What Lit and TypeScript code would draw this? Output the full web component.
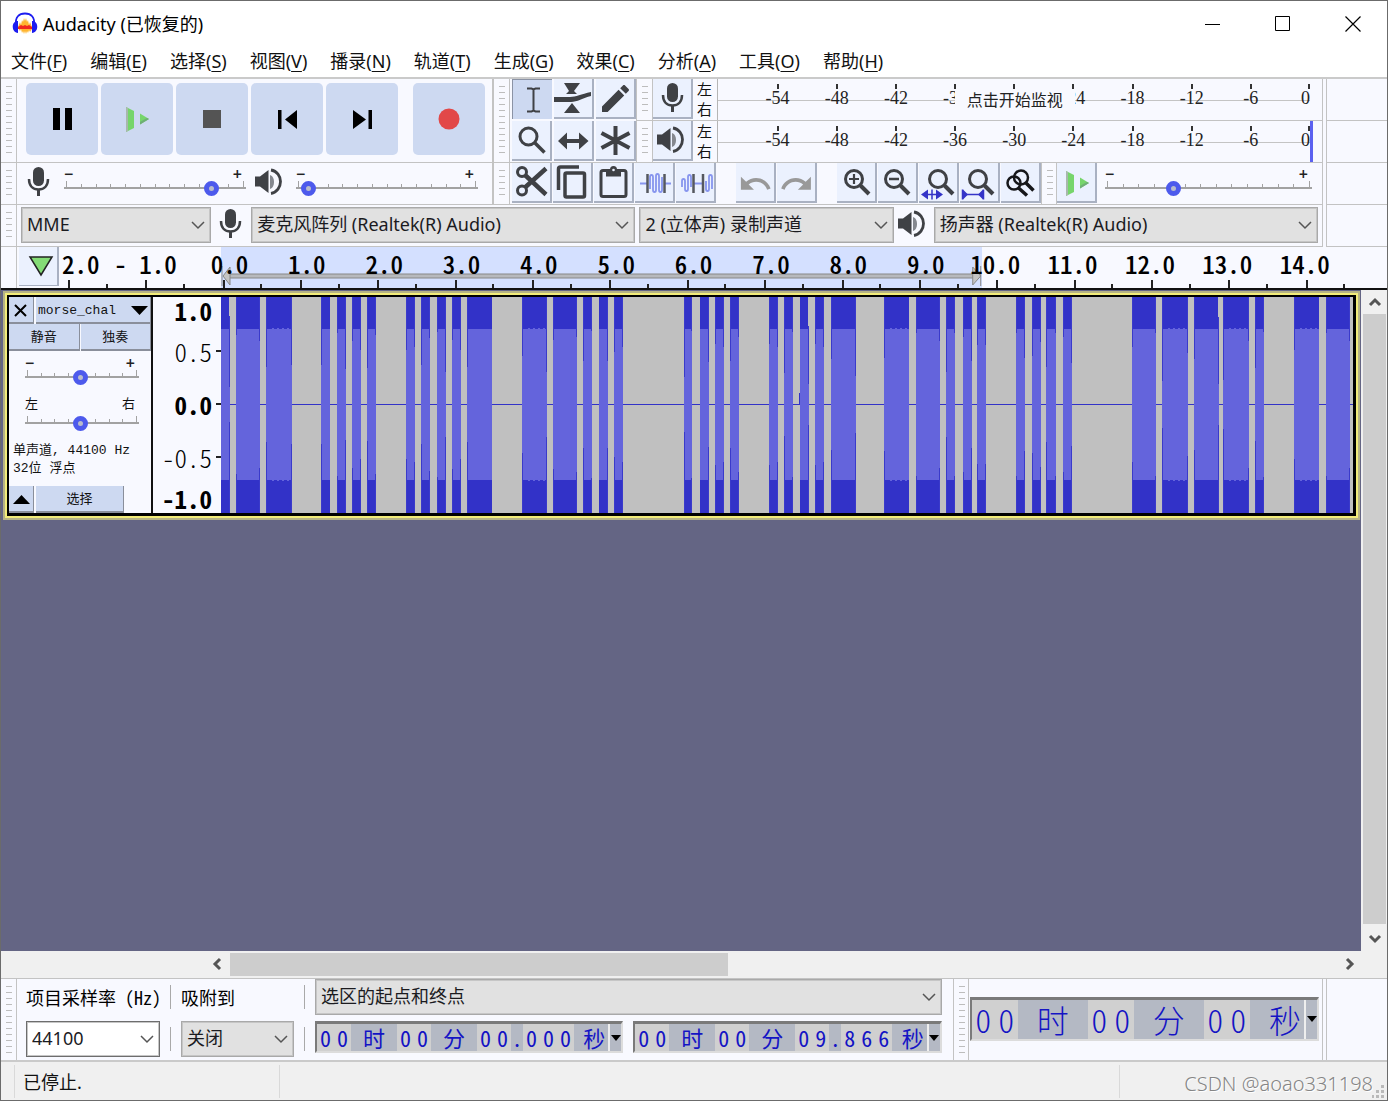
import { LitElement, html, css, svg, nothing } from "lit";
import { customElement, property } from "lit/decorators.js";
import { classMap } from "lit/directives/class-map.js";

const shared = css`
  :host {
    --face: #f8f9ff;
    --button: #cdd9f1;
    --tool: #ebf1fe;
    --line: #c3c3c3;
    --ink: #3f4145;
    --ui: "Noto Sans", "Noto Sans CJK SC", sans-serif;
    --half: "Noto Sans CJK SC", sans-serif;
  }
  * {
    box-sizing: border-box;
  }
  button {
    margin: 0;
    padding: 0;
    border: 0;
    background: none;
    font: inherit;
    color: inherit;
  }
  svg {
    display: block;
  }
`;

/* ---------- icons, all drawn on a 40 x 40 field ---------- */

const greenPlay = svg`
  <path d="M9 8l8 4v17l-8 4z" fill="#76d56b"/>
  <path d="M9 8l2 1v23l-2 1z" fill="#a8b8ac"/>
  <path d="M23 14.500l9 5.500-9 5.500z" fill="#76d56b"/>
  <path d="M23 25.500l9-5.500-2-1-7 4z" fill="#6fae76"/>`;

const lens = (cx: number, cy: number) => svg`
  <circle cx=${cx} cy=${cy} r="8.500" fill="none" stroke="currentColor" stroke-width="3"/>
  <path d="M${cx + 6.5} ${cy + 6.5}L${cx + 15} ${cy + 15}" stroke="currentColor" stroke-width="4"/>`;

const micShape = svg`
  <rect x="14" y="4" width="11" height="19" rx="5.500" fill="currentColor"/>
  <path d="M10 16c0 7 4 10.500 9.500 10.500S29 23 29 16" fill="none" stroke="currentColor" stroke-width="2.500"/>
  <path d="M19.500 26v7" stroke="currentColor" stroke-width="3"/>`;

const speakerShape = svg`
  <path d="M4 13.500h5l8.500-6.500v23L9 23.500H4z" fill="currentColor"/>
  <path d="M19 12v14c3-1 4-4 4-7s-1-6-4-7z" fill="#85888f"/>
  <path d="M20 7c6 1 9.500 6 9.500 11.500S26 29.500 20 30.500" fill="none" stroke="currentColor" stroke-width="2.800"/>`;

const icons: Record<string, unknown> = {
  ibeam: svg`<path d="M14 8.500h4.500l2 1 2-1H27M20.500 9v22M14 31.500h4.500l2-1 2 1H27" fill="none" stroke="currentColor" stroke-width="2"/>`,
  envelope: svg`<path d="M10 4h16l-6 8 3 3H12l3-3zM10 34h16l-8-10z" fill="currentColor"/>
    <path d="M0 18h16c6 0 11-3 21-5v4c-8 2-14 6-20 6H0z" fill="currentColor"/>`,
  pencil: svg`<g transform="translate(1.500 1.500) scale(1.500)"><path d="M3 17.250V21h3.750L17.810 9.940l-3.750-3.750L3 17.250zM20.710 7.040c.39-.39.39-1.020 0-1.410l-2.340-2.340c-.39-.39-1.020-.39-1.410 0l-1.830 1.830 3.750 3.750 1.830-1.830z" fill="currentColor"/></g>`,
  zoom: svg`<circle cx="16.500" cy="15.500" r="8.500" fill="none" stroke="currentColor" stroke-width="3"/><path d="M22.500 21.500l10 10" stroke="currentColor" stroke-width="3.500"/>`,
  shift: svg`<path d="M4 20l9-8.500v6.500h12v-6.500l9.500 8.500-9.500 8.500V22H13v6.500z" fill="currentColor"/>`,
  multi: svg`<path d="M19.500 5v29M5.500 12l28 15M33.500 12l-28 15" stroke="currentColor" stroke-width="4"/>`,
  mic: micShape,
  speaker: speakerShape,
  cut: svg`<g fill="none" stroke="currentColor"><circle cx="10" cy="9" r="4.500" stroke-width="3"/><circle cx="10" cy="27.500" r="4.500" stroke-width="3"/>
    <path d="M13 12L34 31.500M13 24.500L34 5.500" stroke-width="4.500"/></g>`,
  copy: svg`<g fill="none" stroke="currentColor" stroke-width="3.500"><path d="M5.500 27V6a2 2 0 0 1 2-2H26"/><rect x="12" y="10" width="19.500" height="24" rx="1.500"/></g>`,
  paste: svg`<rect x="7" y="7.500" width="25" height="26" rx="2" fill="none" stroke="currentColor" stroke-width="3"/>
    <path d="M12 6.500h4a3.500 3.500 0 0 1 7 0h4v7H12z" fill="currentColor"/><circle cx="19.500" cy="7" r="1.300" fill="#ebf1fe"/>`,
  trim: svg`<path d="M5 20.500h7M29 20.500h7M15 26V14q0-2 1.500-2t1.500 2v13q0 2 1.500 2t1.500-2V13q0-2 1.500-2t1.500 2v14q0 2 1.500 2t1.500-2V14" fill="none" stroke="#8795ee" stroke-width="1.800"/>
    <path d="M12.500 11v19M29.500 11v19" stroke="#55585f" stroke-width="2.500"/>`,
  silence: svg`<path d="M6 24v-6q0-2 1.500-2t1.500 2v8q0 2 1.500 2t1.500-2V14q0-2 1.500-2t1.500 2v10M18 20.500h9M30 18v8q0 2 1.500 2t1.500-2V14q0-2 1.500-2t1.500 2v12" fill="none" stroke="#8795ee" stroke-width="1.800"/>
    <path d="M17.500 11v19M27 11v19" stroke="#55585f" stroke-width="2.500"/>`,
  undo: svg`<g transform="translate(2 3.500) scale(1.450)"><path d="M12.500 8c-2.650 0-5.050.99-6.900 2.600L2 7v9h9l-3.620-3.620c1.390-1.160 3.160-1.880 5.120-1.880 3.540 0 6.550 2.310 7.600 5.500l2.370-.78C21.080 11.030 17.150 8 12.500 8z" fill="#999"/></g>`,
  redo: svg`<g transform="translate(2 3.500) scale(1.450)"><path d="M18.400 10.600C16.550 8.990 14.150 8 11.500 8c-4.650 0-8.580 3.030-9.960 7.220L3.900 16c1.050-3.190 4.050-5.500 7.600-5.500 1.950 0 3.730.72 5.120 1.880L13 16h9V7l-3.600 3.600z" fill="#999"/></g>`,
  zoomIn: svg`${lens(17, 16)}<path d="M12 16h10M17 11v10" stroke="currentColor" stroke-width="2.200"/>`,
  zoomOut: svg`${lens(16, 16)}<path d="M11 16h10" stroke="currentColor" stroke-width="2.500"/>`,
  fitSelection: svg`${lens(19, 16)}<path d="M2 31.500l7-5v10zM24 31.500l-7-5v10z" fill="#3434c8"/><path d="M8 31.500h10M13 26.500v10" stroke="#3434c8" stroke-width="1.500"/>`,
  fitProject: svg`${lens(18, 16)}<path d="M8 31.500l-5-5v10zM18 31.500l5-5v10z" fill="#3434c8"/><path d="M3 31.500h20M2.500 26.500v10M23.500 26.500v10" stroke="#3434c8" stroke-width="1.500"/>`,
  zoomToggle: svg`<g fill="none" stroke="#16171a"><circle cx="13" cy="20" r="6.500" stroke-width="2.500"/><circle cx="20" cy="14.500" r="7" stroke-width="2.500"/>
    <path d="M17 24.500l9 8M25 20l7.500 7.500" stroke-width="3.500"/></g>`,
  play: greenPlay,
  pause: svg`<path d="M11 9h7v22h-7zM23 9h7v22h-7z" fill="#000"/>`,
  stop: svg`<path d="M11 11h18v18H11z" fill="#545454"/>`,
  start: svg`<path d="M11 11h3.500v19H11zM30 11v19l-12-9.500z" fill="#000"/>`,
  end: svg`<path d="M26.500 11H30v19h-3.500zM11 11v19l13-9.500z" fill="#000"/>`,
  record: svg`<circle cx="20" cy="20" r="10.500" fill="#e24848"/>`,
};

const icon = (name: string) =>
  html`<svg width="40" height="40" viewBox="0 0 40 40" aria-hidden="true">${icons[name]}</svg>`;

/* ---------- slider with tick marks ---------- */

@customElement("tick-slider")
export class TickSlider extends LitElement {
  @property() low = "−";
  @property() high = "+";
  @property() name = "";
  @property({ type: Number }) value = 50;
  @property({ type: Number }) ticks = 13;

  static styles = [
    shared,
    css`
      :host {
        display: block;
      }
      .ends {
        display: flex;
        justify-content: space-between;
        padding-right: 4px;
        height: 13px;
        font: 600 16px/14px var(--ui);
        color: #222;
      }
      .body {
        position: relative;
        height: 16px;
      }
      .marks {
        display: flex;
        justify-content: space-between;
        align-items: flex-end;
        height: 9px;
        padding: 0 2px;
        border-bottom: 2px solid #a2a2a2;
      }
      .marks i {
        width: 1px;
        height: 3px;
        background: #a2a2a2;
      }
      .marks i:first-child,
      .marks i:last-child {
        height: 6px;
      }
      input {
        position: absolute;
        inset: 0;
        width: 100%;
        height: 16px;
        margin: 0;
        background: none;
        appearance: none;
      }
      input::-webkit-slider-thumb {
        appearance: none;
        width: 15px;
        height: 15px;
        border: 5px solid #4d5aec;
        border-radius: 50%;
        background: #b9bccb;
      }
    `,
  ];

  render() {
    return html`
      ${this.low || this.high
        ? html`<div class="ends"><span>${this.low}</span><span>${this.high}</span></div>`
        : nothing}
      <div class="body">
        <div class="marks">${Array.from({ length: this.ticks }, () => html`<i></i>`)}</div>
        <input type="range" min="0" max="100" .value=${String(this.value)} aria-label=${this.name} />
      </div>
    `;
  }
}

/* ---------- drop-down box ---------- */

const dropStyles = css`
  .drop {
    display: grid;
    grid-template-columns: minmax(0, 1fr);
    min-width: 0;
    height: 36px;
  }
  .drop select,
  .drop svg {
    grid-area: 1 / 1;
  }
  .drop select {
    width: 100%;
    margin: 0;
    padding: 0 30px 2px 5px;
    border: 1px solid #a9a9a9;
    border-radius: 0;
    outline: 1px solid #c6c6c6;
    outline-offset: -2px;
    background: #e1e1e1;
    appearance: none;
    font: 18px/24px var(--ui);
    color: #1b1b1f;
  }
  .drop.editable select {
    border-color: #6d6d6d;
    background: #fff;
  }
  .drop svg {
    align-self: center;
    justify-self: end;
    margin-right: 6px;
    pointer-events: none;
  }
`;

const drop = (id: string, value: string, extra = "", name = "") => html`
  <div class="drop ${extra}">
    <select id=${id} aria-label=${name || nothing}><option>${value}</option></select>
    <svg width="14" height="10" viewBox="0 0 14 10"><path d="M1 2l6 6 6-6" fill="none" stroke="#555" stroke-width="1.500"/></svg>
  </div>
`;

/* ---------- level meter ---------- */

@customElement("level-meter")
export class LevelMeter extends LitElement {
  @property() kind = "mic";
  @property() hint = "";

  static styles = [
    shared,
    css`
      :host {
        display: flex;
        flex: 1;
        min-width: 0;
      }
      .source {
        width: 40px;
        height: 40px;
        overflow: hidden;
        border-right: 2px solid #a9b1c2;
        border-bottom: 2px solid #a9b1c2;
        background: var(--tool);
        color: var(--ink);
      }
      .sides {
        display: flex;
        flex-direction: column;
        width: 24px;
        padding-left: 4px;
        font: 15px/20px var(--half);
        color: #111;
      }
      .scale {
        position: relative;
        flex: 1;
        display: grid;
        grid-template-columns: repeat(9, 2fr) 1fr;
        padding-left: 30px;
        border-left: 1px solid #b5b5b5;
        background: linear-gradient(#c4c4c4, #c4c4c4) 0 21px / 100% 1px no-repeat;
      }
      .mark {
        display: flex;
        flex-direction: column;
        align-items: center;
        padding-top: 5px;
        font: 18px/18px "Liberation Serif", serif;
        color: #222;
      }
      .mark::before {
        content: "";
        width: 2px;
        height: 5px;
        background: #333;
      }
      .zero {
        align-items: flex-end;
      }
      .end {
        width: 12px;
        border-left: 3px solid transparent;
      }
      .peak {
        border-color: #5b61f0;
      }
      .hint {
        position: absolute;
        top: 10px;
        left: 40%;
        width: 120px;
        background: var(--face);
        font: 16px/20px var(--half);
        text-align: center;
        color: #222;
      }
    `,
  ];

  render() {
    const middle = this.hint ? "" : "-30";
    const marks = ["-54", "-48", "-42", "-36", middle, "-24", "-18", "-12", "-6", "0"];
    return html`
      <button class="source" aria-label=${this.kind}>${icon(this.kind)}</button>
      <div class="sides"><span>左</span><span>右</span></div>
      <div class="scale">
        ${marks.map((m) => html`<span class=${classMap({ mark: true, zero: m === "0" })}>${m}</span>`)}
        ${this.hint ? html`<span class="hint">${this.hint}</span>` : nothing}
      </div>
      <div class=${classMap({ end: true, peak: !this.hint })}></div>
    `;
  }
}

/* ---------- time read-out ---------- */

@customElement("time-field")
export class TimeField extends LitElement {
  @property({ type: Array }) parts: string[] = [];
  @property({ type: Boolean, reflect: true }) large = false;

  static styles = [
    shared,
    css`
      :host {
        display: flex;
        flex: 1;
        height: 32px;
        border: 2px solid #dcdcdc;
        border-top: 3px solid #7a7a7a;
        border-left-color: #7a7a7a;
        background: #b4b9c4;
        font: 22px/26px var(--half);
        color: #1414c4;
        --cell: 17px;
        --sep: 46px;
      }
      :host([large]) {
        height: 44px;
        font-size: 32px;
        font-weight: 300;
        line-height: 38px;
        --cell: 23px;
        --sep: 70px;
      }
      .box {
        display: flex;
        background: #d0d0d0;
      }
      .box span {
        width: var(--cell);
        text-align: center;
        font-feature-settings: "hwid";
      }
      .sep {
        width: var(--sep);
        text-align: center;
      }
      .point {
        width: 12px;
        text-align: center;
      }
      .last {
        flex: 1;
        text-align: right;
        padding-right: 3px;
      }
      .format {
        width: 13px;
        border-left: 2px solid #eee;
        display: grid;
        place-items: center;
      }
    `,
  ];

  render() {
    return html`
      ${this.parts.map((p, i) => {
        if (/^\d+$/.test(p)) return html`<span class="box">${[...p].map((d) => html`<span>${d}</span>`)}</span>`;
        const last = i === this.parts.length - 1;
        return html`<span class=${classMap({ sep: !last && p !== ".", point: p === ".", last })}>${p}</span>`;
      })}
      <button class="format" aria-label="format"><svg width="10" height="6" viewBox="0 0 10 6"><path d="M0 0h10L5 6z"/></svg></button>
    `;
  }
}

/* ---------- audio clip ---------- */

/* start, end, depth of the left edge, depth of the right edge */
const bursts: number[][] = [
  [221, 230, 328, 387], [236, 260, 335, 341], [266, 292, 367, 365],
  [321, 330, 365, 328], [337, 346, 333, 369], [352, 361, 341, 350], [367, 376, 368, 335],
  [406, 415, 350, 347], [421, 430, 365, 338], [437, 446, 332, 372], [452, 461, 340, 350], [467, 492, 367, 328],
  [522, 547, 356, 372], [553, 577, 340, 337], [583, 592, 361, 331], [599, 608, 328, 361], [614, 623, 352, 347],
  [684, 692, 377, 331], [700, 709, 328, 362], [715, 724, 344, 347], [730, 739, 361, 337],
  [769, 778, 344, 347], [784, 793, 373, 332], [800, 809, 328, 384], [815, 824, 344, 347], [831, 856, 359, 376],
  [884, 909, 358, 328], [916, 940, 333, 341], [946, 955, 372, 333], [963, 972, 337, 361], [977, 986, 345, 345],
  [1016, 1025, 333, 358], [1032, 1041, 356, 342], [1046, 1056, 367, 333], [1063, 1072, 337, 363],
  [1132, 1156, 347, 333], [1162, 1188, 381, 353], [1194, 1219, 359, 384], [1223, 1249, 380, 341], [1255, 1264, 368, 332],
  [1294, 1319, 350, 328], [1326, 1350, 333, 341],
];

@customElement("wave-clip")
export class WaveClip extends LitElement {
  static styles = [
    shared,
    css`
      :host {
        display: block;
        flex: 1;
        min-width: 0;
        background: #c0c0c0;
      }
      svg {
        width: 100%;
        height: 216px;
      }
    `,
  ];

  render() {
    const top = 297;
    return html`
      <svg viewBox="221 297 1132 216" preserveAspectRatio="none" shape-rendering="crispEdges">
        <path d="M221 404h1132v1H221z" fill="#3232c8" />
        <path d="M799 393h1v12h-1z" fill="#3232c8" />
        ${bursts.map(([a, b, l, r], i) => {
          const edge = (x: number, y: number) =>
            svg`<path d="M${x} ${top}h1V${y}h-1zM${x} ${809 - y}h1V513h-1z" fill="#3a3acb"/>`;
          const frill = b - a > 20 && i % 2 === 0;
          return svg`
            <path d="M${a} ${top}H${b}V513H${a}z" fill="#3232c8"/>
            <path d="M${a} 329H${b}V480H${a}z" fill="#6464dc"/>
            ${frill ? svg`<path d="M${a + 6} 328.500H${b - 1}M${a + 6} 480.500H${b - 1}" stroke="#6464dc" stroke-dasharray="2 3"/>` : nothing}
            ${l > 328 ? edge(a, l) : nothing}${r > 328 ? edge(b - 1, r) : nothing}`;
        })}
        <path d="M229 297h1v19h-1zM808 297h1v29h-1zM1218 297h1v20h-1z" fill="#c0c0c0" />
      </svg>
    `;
  }
}

/* ---------- window ---------- */

@customElement("app-root")
export class AppRoot extends LitElement {
  static styles = [
    shared,
    dropStyles,
    css`
      :host {
        display: flex;
        flex-direction: column;
        min-height: 100vh;
        border: 1px solid #6b6b6b;
        box-sizing: border-box;
        background: #fff;
        font: 18px/24px var(--ui);
        color: #111;
      }
      .title {
        display: flex;
        align-items: center;
        height: 45px;
        padding: 0 2px 0 11px;
        gap: 5px;
      }
      .title h1 {
        flex: 1;
        margin: 0;
        font: 18px/24px var(--ui);
        color: #000;
      }
      .win {
        display: grid;
        place-items: center;
        width: 65px;
        height: 44px;
      }
      .menu {
        display: flex;
        align-items: center;
        gap: 23px;
        height: 31px;
        padding: 0 0 2px 10px;
      }
      .menu u {
        text-underline-offset: 3px;
      }

      /* toolbars */
      .dock {
        display: flex;
        border-top: 2px solid #cacaca;
        background: var(--face);
      }
      .bars {
        flex: 1;
        min-width: 0;
        margin-right: 3px;
        border-right: 1px solid var(--line);
      }
      .rest {
        width: 61px;
        border-left: 1px solid var(--line);
      }
      .rest div {
        height: 42px;
        border-bottom: 1px solid var(--line);
      }
      .pair,
      .row {
        display: flex;
      }
      .left {
        width: 493px;
        border-right: 2px solid var(--line);
      }
      .right {
        flex: 1;
        min-width: 0;
      }
      .row {
        height: 42px;
        border-bottom: 1px solid var(--line);
      }
      .tall {
        height: 84px;
      }
      .grip {
        flex: none;
        width: 16px;
        border-right: 1px solid var(--line);
        background: repeating-linear-gradient(#bdbdbd 0 1px, transparent 1px 6px) 5px 7px / 6px calc(100% - 14px) no-repeat;
      }
      .plain {
        background: none;
      }
      .transport {
        display: flex;
        gap: 3px;
        padding: 4px 0 0 9px;
      }
      .big {
        display: grid;
        place-items: center;
        width: 72px;
        height: 72px;
        border-radius: 5px;
        background: var(--button);
      }
      .pic {
        display: grid;
        place-items: start center;
        flex: none;
        width: 40px;
        color: var(--ink);
      }
      .big:last-child {
        margin-left: 12px;
      }
      .tools {
        display: grid;
        grid-template-columns: repeat(3, 40px);
        grid-auto-rows: 40px;
        gap: 2px;
        padding-left: 2px;
      }
      .tool {
        flex: none;
        width: 40px;
        height: 40px;
        overflow: hidden;
        border-right: 2px solid #a9b1c2;
        border-bottom: 2px solid #a9b1c2;
        background: var(--tool);
        color: var(--ink);
      }
      .tool.on {
        border: 0;
        border-top: 1px solid #8b93a5;
        border-left: 1px solid #8b93a5;
        background: var(--button);
      }
      .meters {
        flex: 1;
        min-width: 0;
        border-left: 1px solid var(--line);
      }
      .mixer tick-slider {
        flex: 1;
        margin: 4px 3px 0;
      }
      .mixer .pic {
        width: 44px;
      }
      .mixer tick-slider:last-child {
        margin-right: 14px;
      }
      .edit {
        display: flex;
        gap: 1px;
        padding-left: 2px;
      }
      .group {
        margin-left: 19px;
      }
      .speed {
        flex: 1;
        margin: 4px 10px 0 8px;
      }
      .edge {
        border-left: 1px solid var(--line);
      }
      .devices {
        padding-right: 4px;
      }
      .devices .grip {
        margin-right: 4px;
      }
      .devices .drop {
        margin-top: 2px;
      }
      .host {
        flex: 190;
      }
      .input {
        flex: 384;
      }
      .devices .channels {
        flex: 254;
        margin-left: 4px;
      }

      /* timeline */
      .timeline {
        display: flex;
        height: 43px;
        border-bottom: 2px solid #111;
        background: var(--face);
      }
      .pin {
        display: grid;
        place-items: center;
        width: 40px;
        margin: 0 0 2px 2px;
        padding-left: 5px;
        border-right: 2px solid #a9b1c2;
        border-bottom: 1px solid #a9b1c2;
        background: var(--tool);
      }
      .ruler {
        flex: 1;
        overflow: hidden;
        padding: 0 4px 0 9px;
      }
      .seconds {
        position: relative;
        display: grid;
        grid-template-columns: repeat(17, minmax(0, 1fr));
        height: 41px;
      }
      .second {
        position: relative;
        display: flex;
        background:
          linear-gradient(#222, #222) 0 100% / 2px 8px no-repeat,
          linear-gradient(#222, #222) 50% 100% / 2px 4px no-repeat;
        white-space: nowrap;
      }
      .num {
        font: 500 25px/24px var(--half);
        font-feature-settings: "hwid";
        color: #000;
      }
      .second .num {
        margin: 4px 0 0 -12px;
      }
      .second .wide {
        margin-left: -26px;
      }
      .second .minus {
        margin-left: -31px;
      }
      .second .first {
        margin-left: -6px;
      }
      .selection {
        position: absolute;
        top: 0;
        bottom: 0;
        left: 11.65%;
        width: 57.85%;
        background: #d4e0ff;
      }
      .range {
        position: absolute;
        left: 0;
        bottom: 2px;
        width: 100%;
        overflow: visible;
      }

      /* tracks */
      .work {
        flex: 1;
        display: flex;
      }
      .canvas {
        flex: 1;
        min-width: 0;
        padding: 1px 1px 0 2px;
        background: #646584;
      }
      .track {
        border: 2px solid #b5b286;
      }
      .focus {
        border: 2px solid #f2ec7a;
      }
      .inner {
        display: flex;
        border: solid #000;
        border-width: 2px 3px 3px 2px;
        background: var(--face);
      }
      .panel {
        display: flex;
        flex-direction: column;
        width: 144px;
        border-right: 2px solid #111;
        font: 13px/18px "Liberation Mono", "Noto Sans CJK SC", monospace;
      }
      .strip {
        display: grid;
        height: 27px;
        gap: 2px;
      }
      .strip button {
        display: flex;
        align-items: center;
        justify-content: center;
        padding-top: 2px;
        border-right: 1px solid #8a8f9b;
        border-bottom: 2px solid #8a8f9b;
        background: var(--button);
      }
      .head {
        grid-template-columns: 25px 1fr;
      }
      .head .label {
        justify-content: space-between;
        padding: 2px 2px 0;
      }
      .half {
        grid-template-columns: 1fr 1fr;
        gap: 1px;
      }
      .foot {
        grid-template-columns: 25px 88px;
        margin-top: auto;
      }
      .panel tick-slider {
        margin: 5px 12px 0 16px;
      }
      .sides {
        display: flex;
        justify-content: space-between;
        margin: 11px 16px 0;
      }
      .panel .pan {
        margin-top: 1px;
      }
      .about {
        margin: 0;
        padding: 11px 0 0 4px;
        white-space: nowrap;
      }
      .levels {
        display: grid;
        grid-template-rows: 28px 1fr 1fr 1fr 28px;
        width: 68px;
      }
      .levels .num {
        display: flex;
        align-items: center;
        justify-content: flex-end;
        padding: 0 9px 2px 0;
      }
      .levels .num:nth-child(odd) {
        font-weight: 700;
      }
      .levels .num:nth-child(even) {
        font-weight: 300;
      }
      .levels .tick {
        padding-right: 0;
      }
      .levels .tick::after {
        content: "";
        width: 5px;
        height: 2px;
        margin-left: 4px;
        background: #222;
      }

      /* scroll bars */
      .vbar {
        display: flex;
        flex-direction: column;
        width: 26px;
        padding: 0 1px 0 2px;
        background: #f0f0f0;
      }
      .vbar button,
      .hbar button {
        display: grid;
        place-items: center;
        width: 24px;
        height: 26px;
      }
      .vbar button {
        height: 24px;
      }
      .vthumb {
        flex: 1;
        margin-bottom: 3px;
        background: #cdcdcd;
      }
      .hbar {
        display: flex;
        height: 27px;
        padding: 0 25px 0 204px;
        background: #f0f0f0;
      }
      .htrack {
        flex: 1;
        padding: 2px 1px;
      }
      .hthumb {
        width: 45%;
        height: 23px;
        background: #cdcdcd;
      }

      /* selection bar */
      .bottom {
        display: flex;
        height: 84px;
        border-top: 1px solid var(--line);
        border-bottom: 2px solid #cacaca;
        background: var(--face);
      }
      .choices {
        flex: 915;
        display: grid;
        grid-template-columns: 134px 1px 113px 1px 1fr;
        grid-template-rows: 36px 36px;
        gap: 6px 10px;
        padding: 0 11px 0 9px;
        min-width: 0;
      }
      .choices label {
        align-self: center;
        font: 18px/24px var(--half);
        font-feature-settings: "hwid";
        color: #000;
        white-space: nowrap;
      }
      .rule {
        align-self: center;
        height: 24px;
        background: #a9a9a9;
      }
      .fields {
        display: flex;
        gap: 10px;
        min-width: 0;
      }
      .clock {
        flex: 349;
        display: flex;
        align-items: center;
        padding: 0 3px 2px 1px;
        border-right: 1px solid var(--line);
      }
      .tail {
        width: 61px;
        margin-left: 3px;
        border-left: 1px solid var(--line);
      }

      /* status */
      .status {
        display: flex;
        position: relative;
        height: 38px;
        padding: 3px 0 2px 13px;
        background: #f0f0f0;
        line-height: 34px;
      }
      .status span {
        padding-left: 8px;
        border-left: 1px solid #d9d9d9;
      }
      .state {
        width: 265px;
      }
      .mid {
        flex: 1;
      }
      .status .sign {
        width: 268px;
        padding: 2px 14px 0 0;
        font: 300 20px/34px "Noto Sans", sans-serif;
        text-align: right;
        color: #858585;
        text-shadow: 1px 1px 0 #fff;
      }
      .corner {
        position: absolute;
        right: 2px;
        bottom: 2px;
      }
    `,
  ];

  private tool(name: string, extra: Record<string, boolean> = {}) {
    return html`<button class=${classMap({ tool: true, ...extra })} aria-label=${name}>${icon(name)}</button>`;
  }

  private chevron(d: string) {
    return html`<svg width="14" height="14" viewBox="0 0 14 14"><path d=${d} fill="none" stroke="#555" stroke-width="3"/></svg>`;
  }

  render() {
    const menus = [
      ["文件", "F"], ["编辑", "E"], ["选择", "S"], ["视图", "V"], ["播录", "N"], ["轨道", "T"],
      ["生成", "G"], ["效果", "C"], ["分析", "A"], ["工具", "O"], ["帮助", "H"],
    ];
    const seconds = ["2.0", "- 1.0", ...Array.from({ length: 15 }, (_, i) => `${i}.0`)];
    return html`
      <header class="title">
        <svg width="26" height="24" viewBox="0 0 26 24" aria-hidden="true">
          <path d="M4 13C3 5 7 1.500 13 1.500S23 5 22 13" fill="none" stroke="#1c1cf0" stroke-width="1.800"/>
          <path d="M6 15l2-5 1 3 1-5 1 2 1-4 1 3 1-3 1 4 1-2 1 5 1-3 2 5v2l-2 3-1-2-1 3-1-2-1 3-1-3-1 3-1-3-1 2-1-4-1 2-2-3z" fill="#ffb52e"/>
          <path d="M6 15l3-2 2 1 2-1 2 1 2-1 3 2v2H6z" fill="#f0281e"/>
          <path d="M6 9c-7 0-7 11 0 12zM20 9c7 0 7 11 0 12z" fill="#1c1cf0"/>
        </svg>
        <h1>Audacity (已恢复的)</h1>
        <button class="win" aria-label="minimize"><svg width="16" height="16"><path d="M0 8.500h15" stroke="#000"/></svg></button>
        <button class="win" aria-label="maximize"><svg width="16" height="16"><path d="M.5.500h14v14H.5z" fill="none" stroke="#000"/></svg></button>
        <button class="win" aria-label="close"><svg width="16" height="16"><path d="M.5.500l15 15M15.500.500l-15 15" stroke="#000" stroke-width="1.200"/></svg></button>
      </header>
      <nav class="menu">${menus.map(([t, k]) => html`<button>${t}(<u>${k}</u>)</button>`)}</nav>

      <section class="dock">
        <div class="bars">
          <div class="pair">
            <div class="left">
              <div class="row tall">
                <div class="grip"></div>
                <div class="transport">
                  ${["pause", "play", "stop", "start", "end", "record"].map(
                    (n) => html`<button class="big" aria-label=${n}>${icon(n)}</button>`
                  )}
                </div>
              </div>
              <div class="row mixer">
                <div class="grip"></div>
                <span class="pic">${icon("mic")}</span>
                <tick-slider name="recording volume" .value=${84}></tick-slider>
                <span class="pic">${icon("speaker")}</span>
                <tick-slider name="playback volume" .value=${3}></tick-slider>
              </div>
            </div>
            <div class="right">
              <div class="pair">
                <div class="row tall">
                  <div class="grip"></div>
                  <div class="tools">
                    ${this.tool("ibeam", { on: true })}
                    ${["envelope", "pencil", "zoom", "shift", "multi"].map((n) => this.tool(n))}
                  </div>
                </div>
                <div class="meters">
                  <div class="row"><div class="grip"></div><level-meter kind="mic" hint="点击开始监视"></level-meter></div>
                  <div class="row"><div class="grip"></div><level-meter kind="speaker"></level-meter></div>
                </div>
              </div>
              <div class="row">
                <div class="grip"></div>
                <div class="edit">
                  ${["cut", "copy", "paste", "trim", "silence"].map((n) => this.tool(n))}
                  ${this.tool("undo", { group: true })}${this.tool("redo")}
                  ${this.tool("zoomIn", { group: true })}
                  ${["zoomOut", "fitSelection", "fitProject", "zoomToggle"].map((n) => this.tool(n))}
                </div>
                <div class="grip edge"></div>
                ${this.tool("play")}
                <tick-slider class="speed" name="playback speed" .value=${32} .ticks=${14}></tick-slider>
              </div>
            </div>
          </div>
          <div class="row devices">
            <div class="grip"></div>
            ${drop("host", "MME", "host", "audio host")}
            <span class="pic">${icon("mic")}</span>
            ${drop("source", "麦克风阵列 (Realtek(R) Audio)", "input", "recording device")}
            ${drop("channels", "2 (立体声) 录制声道", "channels", "recording channels")}
            <span class="pic">${icon("speaker")}</span>
            ${drop("output", "扬声器 (Realtek(R) Audio)", "input", "playback device")}
          </div>
        </div>
        <div class="rest"><div></div><div></div><div></div><div></div></div>
      </section>

      <section class="timeline">
        <div class="grip plain"></div>
        <button class="pin" aria-label="pin play head">
          <svg width="26" height="22" viewBox="0 0 26 22"><path d="M2 2h22L13 20z" fill="#84dc76" stroke="#222" stroke-width="1.500"/></svg>
        </button>
        <div class="ruler">
          <div class="seconds">
            <div class="selection">
              <svg class="range" height="20">
                <path d="M1 0v20" stroke="#888"/>
                <rect x="8" y="8" width="98%" height="4" fill="#b7b9bd" stroke="#888"/>
                <svg width="12" height="20"><path d="M9 1v18L2 10z" fill="#c4c4c4" stroke="#888"/></svg>
                <svg x="100%" width="1" height="20" overflow="visible"><path d="M-9 1v18l8-9zM-1 0v20" fill="#c4c4c4" stroke="#888"/></svg>
              </svg>
            </div>
            ${seconds.map(
              (s, i) => html`<div class="second">
                <span class=${classMap({ num: true, wide: i > 11, minus: i === 1, first: i === 0 })}>${s}</span>
              </div>`
            )}
          </div>
        </div>
      </section>

      <main class="work">
        <div class="canvas">
          <div class="track"><div class="focus"><div class="inner">
            <div class="panel">
              <div class="strip head">
                <button aria-label="close track"><svg width="14" height="14"><path d="M1 1l11 11M12 1L1 12" stroke="#000" stroke-width="2"/></svg></button>
                <button class="label">morse_chal<svg width="17" height="9"><path d="M0 0h17L8.500 9z"/></svg></button>
              </div>
              <div class="strip half"><button>静音</button><button>独奏</button></div>
              <tick-slider name="gain" .value=${48} .ticks=${9}></tick-slider>
              <div class="sides"><span>左</span><span>右</span></div>
              <tick-slider class="pan" name="pan" low="" high="" .value=${48} .ticks=${9}></tick-slider>
              <p class="about">单声道, 44100 Hz<br />32位 浮点</p>
              <div class="strip foot">
                <button aria-label="collapse"><svg width="17" height="9"><path d="M0 9h17L8.500 0z"/></svg></button>
                <button>选择</button>
              </div>
            </div>
            <div class="levels">
              <span class="num">1.0</span><span class="num tick">0.5</span><span class="num tick">0.0</span>
              <span class="num tick">-0.5</span><span class="num">-1.0</span>
            </div>
            <wave-clip></wave-clip>
          </div></div></div>
        </div>
        <div class="vbar">
          <button aria-label="scroll up">${this.chevron("M2 10l5-5 5 5")}</button>
          <div class="vthumb"></div>
          <button aria-label="scroll down">${this.chevron("M2 4l5 5 5-5")}</button>
        </div>
      </main>
      <div class="hbar">
        <button aria-label="scroll left">${this.chevron("M10 2L5 7l5 5")}</button>
        <div class="htrack"><div class="hthumb"></div></div>
        <button aria-label="scroll right">${this.chevron("M4 2l5 5-5 5")}</button>
      </div>

      <section class="bottom">
        <div class="grip"></div>
        <div class="choices">
          <label for="rate">项目采样率 (Hz)</label>
          <i class="rule"></i>
          <label for="snap">吸附到</label>
          <i class="rule"></i>
          ${drop("mode", "选区的起点和终点", "", "selection mode")}
          ${drop("rate", "44100", "editable")}
          <i class="rule"></i>
          ${drop("snap", "关闭")}
          <i class="rule"></i>
          <div class="fields">
            <time-field .parts=${["00", "时", "00", "分", "00", ".", "000", "秒"]}></time-field>
            <time-field .parts=${["00", "时", "00", "分", "09", ".", "866", "秒"]}></time-field>
          </div>
        </div>
        <div class="grip edge"></div>
        <div class="clock"><time-field large .parts=${["00", "时", "00", "分", "00", "秒"]}></time-field></div>
        <div class="tail"></div>
      </section>
      <footer class="status">
        <span class="state">已停止.</span><span class="mid"></span><span class="sign">CSDN @aoao331198</span>
        <svg class="corner" width="13" height="13"><path d="M9 0h3v3H9zM9 5h3v3H9zM9 10h3v3H9zM4 5h3v3H4zM4 10h3v3H4zM0 10h2v3H0z" fill="#b9b9b9"/></svg>
      </footer>
    `;
  }
}
